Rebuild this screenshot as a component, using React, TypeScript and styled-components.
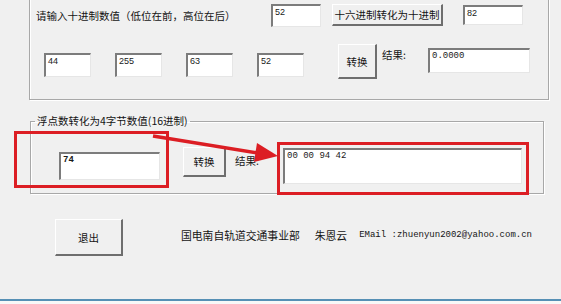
import React from "react";
import styled, { createGlobalStyle } from "styled-components";

const GlobalStyle = createGlobalStyle`
  html, body {
    margin: 0;
    padding: 0;
    background: #f0f0f0;
  }
  body {
    font-family: "Noto Sans CJK SC", "Liberation Sans", sans-serif;
    color: #141414;
  }
`;

const Window = styled.div`
  position: relative;
  width: 561px;
  height: 304px;
  overflow: hidden;
  background: #f0f0f0;
  display: flex;
  flex-direction: column;
`;

const Group = styled.fieldset<{ $left: number; $width: number; $top: number; $pad: string }>`
  box-sizing: border-box;
  min-width: 0;
  margin: ${(p) => p.$top}px 0 0 ${(p) => p.$left}px;
  width: ${(p) => p.$width}px;
  padding: ${(p) => p.$pad};
  border: 1px solid #a8a8a8;
  box-shadow: 1px 1px 0 #ffffff, inset 1px 1px 0 #ffffff;
`;

const Legend = styled.legend`
  margin-left: 4px;
  padding: 0 2px;
  font-size: 10.5px;
  line-height: 14px;
  white-space: nowrap;
`;

const Row = styled.div<{ $top?: number; $left?: number }>`
  display: flex;
  align-items: flex-start;
  margin-top: ${(p) => p.$top ?? 0}px;
  padding-left: ${(p) => p.$left ?? 0}px;
`;

const Label = styled.span<{ $w: number; $ml?: number; $mt?: number; $lh?: number }>`
  flex: 0 0 ${(p) => p.$w}px;
  margin-left: ${(p) => p.$ml ?? 0}px;
  margin-top: ${(p) => p.$mt ?? 0}px;
  font-size: 10.5px;
  line-height: ${(p) => p.$lh ?? 14}px;
  white-space: nowrap;
`;

const TextBox = styled.div<{ $w: number; $h: number; $ml?: number; $mt?: number; $mono?: boolean }>`
  box-sizing: border-box;
  flex: 0 0 ${(p) => p.$w}px;
  height: ${(p) => p.$h}px;
  margin-left: ${(p) => p.$ml ?? 0}px;
  margin-top: ${(p) => p.$mt ?? 0}px;
  padding: 1px 1px 0 2px;
  background: #ffffff;
  border-style: solid;
  border-width: 2px 1px 1px 2px;
  border-color: #7c7c7c #e6e6e6 #e6e6e6 #7c7c7c;
  font-family: ${(p) => (p.$mono ? '"Liberation Mono", monospace' : '"Liberation Sans", sans-serif')};
  font-size: 9px;
  line-height: 11px;
  color: #1a1a1a;
`;

const Button = styled.div<{ $w: number; $h: number; $ml?: number; $mt?: number }>`
  box-sizing: border-box;
  flex: 0 0 ${(p) => p.$w}px;
  height: ${(p) => p.$h}px;
  margin-left: ${(p) => p.$ml ?? 0}px;
  margin-top: ${(p) => p.$mt ?? 0}px;
  display: flex;
  align-items: center;
  justify-content: center;
  background: #f0f0f0;
  border-style: solid;
  border-width: 1px 2px 2px 1px;
  border-color: #ffffff #6e6e6e #6e6e6e #ffffff;
  font-size: 10.5px;
  white-space: nowrap;
`;

const Footer = styled.div`
  display: flex;
  align-items: center;
  margin: 25px 0 0 55px;
`;

const Credit = styled.span<{ $ml: number; $mono?: boolean }>`
  margin: -5px 0 0 ${(p) => p.$ml}px;
  font-family: ${(p) => (p.$mono ? '"Liberation Mono", monospace' : "inherit")};
  font-size: ${(p) => (p.$mono ? 9 : 10.8)}px;
  white-space: nowrap;
`;

const Edge = styled.div`
  margin-top: auto;
  height: 3px;
  border-top: 2px solid #5690b5;
  background: #f8f8f8;
`;

const Mark = styled.div<{ $x: number; $y: number; $w: number; $h: number }>`
  position: absolute;
  box-sizing: border-box;
  left: ${(p) => p.$x}px;
  top: ${(p) => p.$y}px;
  width: ${(p) => p.$w}px;
  height: ${(p) => p.$h}px;
  border: 3px solid #dc1e24;
  pointer-events: none;
`;

const Arrow = styled.svg`
  position: absolute;
  left: 0;
  top: 0;
  pointer-events: none;
`;

export default function App() {
  return (
    <>
      <GlobalStyle />
      <Window>
        <Group $left={29} $width={520} $top={-18} $pad="21px 0 20px 6px">
          <Row>
            <Label $w={235} $lh={23}>
              请输入十进制数值（低位在前，高位在后）
            </Label>
            <TextBox $w={50} $h={23}>52</TextBox>
            <Button $w={111} $h={22} $ml={11}>
              十六进制转化为十进制
            </Button>
            <TextBox $w={60} $h={20} $ml={20} $mt={1}>
              82
            </TextBox>
          </Row>
          <Row $top={17}>
            <TextBox $w={47} $h={24} $ml={8} $mt={9}>44</TextBox>
            <TextBox $w={47} $h={24} $ml={24} $mt={9}>255</TextBox>
            <TextBox $w={47} $h={24} $ml={24} $mt={9}>63</TextBox>
            <TextBox $w={47} $h={24} $ml={24} $mt={9}>52</TextBox>
            <Button $w={39} $h={35} $ml={34}>
              转换
            </Button>
            <Label $w={46} $ml={5} $mt={4}>
              结果:
            </Label>
            <TextBox $w={102} $h={25} $mt={4} $mono>
              0.0000
            </TextBox>
          </Row>
        </Group>

        <Group $left={30} $width={514} $top={14} $pad="19px 0 9px 0">
          <Legend>浮点数转化为4字节数值(16进制)</Legend>
          <Row $left={28}>
            <TextBox $w={101} $h={28} $mt={5} $mono>
              <b>74</b>
            </TextBox>
            <Button $w={43} $h={30} $ml={23}>
              转换
            </Button>
            <Label $w={48} $ml={9} $mt={7}>
              结果:
            </Label>
            <TextBox $w={239} $h={36} $mt={1} $mono>
              00 00 94 42
            </TextBox>
          </Row>
        </Group>

        <Footer>
          <Button $w={68} $h={37}>
            退出
          </Button>
          <Credit $ml={58}>国电南自轨道交通事业部</Credit>
          <Credit $ml={15}>朱恩云</Credit>
          <Credit $ml={12} $mono>
            EMail :zhuenyun2002@yahoo.com.cn
          </Credit>
        </Footer>

        <Edge />

        <Mark $x={14} $y={131} $w={155} $h={57} />
        <Mark $x={277} $y={142} $w={252} $h={53} />
        <Arrow width={561} height={304} viewBox="0 0 561 304">
          <line x1={153} y1={136} x2={258} y2={153} stroke="#dc1e24" strokeWidth={3.5} />
          <polygon points="278,156 254,162 257,143" fill="#dc1e24" />
        </Arrow>
      </Window>
    </>
  );
}
